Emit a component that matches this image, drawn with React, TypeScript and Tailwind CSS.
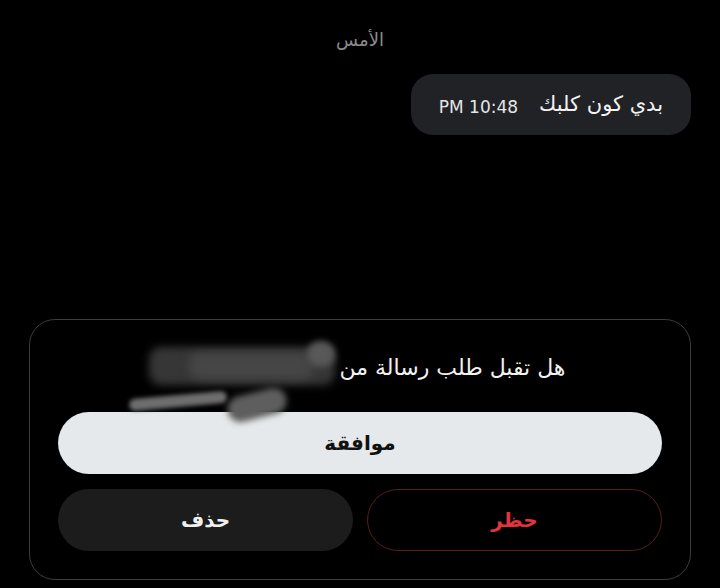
import * as React from "react";

const AR = { fontFamily: '"DejaVu Sans", "Noto Sans", sans-serif' };

export default function App() {
  return (
    <div className="flex h-[588px] w-[720px] flex-col overflow-hidden bg-black" style={AR}>
      {/* Day separator */}
      <div className="pt-[28px] text-center text-[18px] leading-[24px] text-[#8b8b8b]">الأمس</div>

      {/* Outgoing bubble */}
      <div className="mt-[22px] flex justify-end pr-[29px]">
        <div
          dir="rtl"
          className="flex h-[61px] items-center gap-[21px] rounded-[22px] bg-[#202226] px-[28px]"
        >
          <span className="text-[21px] text-[#f2f2f2]">بدي كون كلبك</span>
          <span dir="ltr" className="pt-[6px] text-[17px] text-[#e6e6e6]">
            PM 10:48
          </span>
        </div>
      </div>

      <div className="flex-1" />

      {/* Message request card */}
      <div className="mx-[29px] mb-[8px] rounded-[26px] border border-[#3c3c3c] px-[28px] pb-[28px] pt-[33px]">
        <p dir="rtl" className="pr-[6px] text-center text-[22px] leading-[30px] text-[#f2f2f2]">
          هل تقبل طلب رسالة من{" "}
          <span aria-hidden className="relative inline-block h-[30px] w-[184px] align-top">
            {/* redacted name */}
            <span className="absolute left-0 top-[-6px] h-[38px] w-[186px] rounded-[12px] bg-[#363636] blur-[4px]" />
            <span className="absolute left-[40px] top-[0px] h-[26px] w-[124px] rounded-[10px] bg-[#464646] blur-[5px]" />
            <span className="absolute left-[158px] top-[-12px] h-[26px] w-[28px] rounded-full bg-[#585858] blur-[3px]" />
            <span className="absolute left-[-20px] top-[42px] h-[12px] w-[98px] -rotate-[5deg] rounded-full bg-[#6e6e6e] blur-[2px]" />
            <span className="absolute left-[78px] top-[39px] h-[26px] w-[60px] -rotate-[14deg] rounded-full bg-[#5e5e5e] blur-[3px]" />
          </span>
        </p>

        <button className="mt-[29px] flex h-[62px] w-full items-center justify-center rounded-full bg-[#e6e9eb] text-[20px] font-bold text-[#111]">
          موافقة
        </button>

        <div dir="rtl" className="mt-[15px] grid grid-cols-2 gap-[14px]">
          <button className="flex h-[62px] items-center justify-center rounded-full border border-[#5a1c1e] text-[20px] font-bold text-[#e3343c]">
            حظر
          </button>
          <button className="flex h-[62px] items-center justify-center rounded-full bg-[#1c1c1c] text-[20px] font-bold text-[#f0f0f0]">
            حذف
          </button>
        </div>
      </div>
    </div>
  );
}
